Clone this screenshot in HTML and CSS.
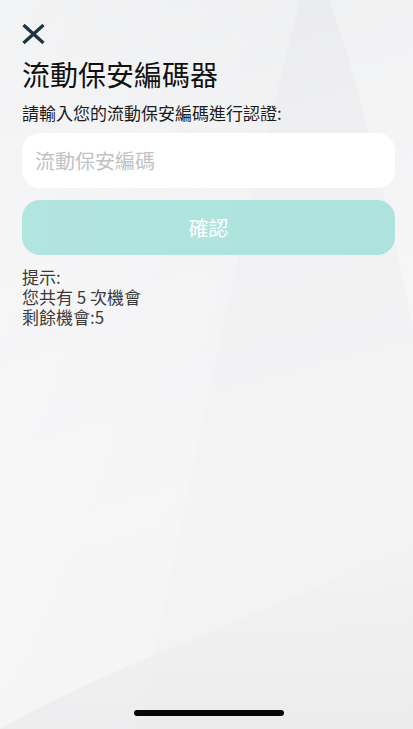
FILE: index.html
```html
<!DOCTYPE html>
<html lang="zh-Hant">
<head>
<meta charset="utf-8">
<meta name="viewport" content="width=device-width, initial-scale=1">
<title>流動保安編碼器</title>
<link rel="stylesheet" href="styles.css">
</head>
<body>
<div class="screen">
  <svg class="backdrop" viewBox="0 0 413 729" preserveAspectRatio="none" aria-hidden="true">
    <defs>
      <linearGradient id="g1" x1="0" y1="0" x2="1" y2="1">
        <stop offset="0" stop-color="#ffffff" stop-opacity="0.45"/>
        <stop offset="1" stop-color="#ffffff" stop-opacity="0"/>
      </linearGradient>
      <linearGradient id="g2" x1="0" y1="0" x2="0" y2="1">
        <stop offset="0" stop-color="#e6e6e8" stop-opacity="0"/>
        <stop offset="1" stop-color="#e6e6e8" stop-opacity="0.5"/>
      </linearGradient>
    </defs>
    <path d="M0 0 L300 0 C250 200 200 420 140 729 L0 729 Z" fill="url(#g1)"/>
    <path d="M330 0 C370 120 400 260 413 330 L413 0 Z" fill="#ffffff" fill-opacity="0.3"/>
    <path d="M0 729 C120 660 260 620 413 540 L413 729 Z" fill="url(#g2)"/>
  </svg>

  <main class="content">
    <button class="close" type="button" aria-label="關閉">
      <svg width="23" height="20" viewBox="0 0 23 20">
        <path d="M1.5 1 L21.5 19 M21.5 1 L1.5 19" stroke="#1d3442" stroke-width="3.3"/>
      </svg>
    </button>
    <h1 class="title">流動保安編碼器</h1>
    <p class="subtitle">請輸入您的流動保安編碼進行認證:</p>
    <div class="field">
      <input class="code-input" type="text" placeholder="流動保安編碼">
    </div>
    <button class="confirm" type="button">確認</button>
    <div class="hint">
      <div class="hint-line">提示:</div>
      <div class="hint-line">您共有 5 次機會</div>
      <div class="hint-line">剩餘機會:5</div>
    </div>
  </main>

  <div class="home-bar"></div>
</div>
</body>
</html>
```

FILE: styles.css
```css
* { box-sizing: border-box; }

html, body {
  margin: 0;
  padding: 0;
}

body {
  font-family: "Noto Sans CJK TC", "Noto Sans", "Liberation Sans", sans-serif;
  color: #1c1c1c;
}

.screen {
  position: relative;
  width: 413px;
  height: 729px;
  overflow: hidden;
  background: linear-gradient(165deg, #e9eaec 0%, #f1f1f3 35%, #f4f4f5 65%, #f2f2f3 100%);
  display: flex;
  flex-direction: column;
}

.backdrop {
  position: absolute;
  inset: 0;
  width: 100%;
  height: 100%;
  z-index: 0;
}

.content {
  position: relative;
  z-index: 1;
  flex: 1;
  display: flex;
  flex-direction: column;
  padding: 24px 18px 0 22px;
}

.close {
  align-self: flex-start;
  width: 23px;
  height: 22px;
  padding: 0;
  border: 0;
  background: none;
  display: flex;
  align-items: flex-start;
}

.title {
  margin: 10px 0 0;
  font-size: 28px;
  font-weight: 400;
  line-height: 36px;
  color: #111;
}

.subtitle {
  margin: 10px 0 0;
  font-size: 17px;
  line-height: 22px;
  color: #1c1c1c;
}

.field {
  margin-top: 9px;
}

.code-input {
  width: 100%;
  height: 55px;
  border: 0;
  border-radius: 18px;
  background: #ffffff;
  padding: 0 13px;
  font-family: inherit;
  font-size: 20px;
  color: #222;
  outline: none;
}

.code-input::placeholder {
  color: #c2c2c4;
}

.confirm {
  margin-top: 12px;
  width: 100%;
  height: 55px;
  border: 0;
  border-radius: 18px;
  background: linear-gradient(90deg, #b2e5e0 0%, #ade2dd 100%);
  color: #ffffff;
  font-family: inherit;
  font-size: 20px;
}

.hint {
  margin-top: 12px;
  display: flex;
  flex-direction: column;
  font-size: 17px;
  color: #3a3a3a;
}

.hint-line {
  height: 20px;
  line-height: 20px;
}

.home-bar {
  position: absolute;
  left: 134px;
  bottom: 13px;
  width: 150px;
  height: 6px;
  border-radius: 3px;
  background: #050505;
  z-index: 2;
}
```
